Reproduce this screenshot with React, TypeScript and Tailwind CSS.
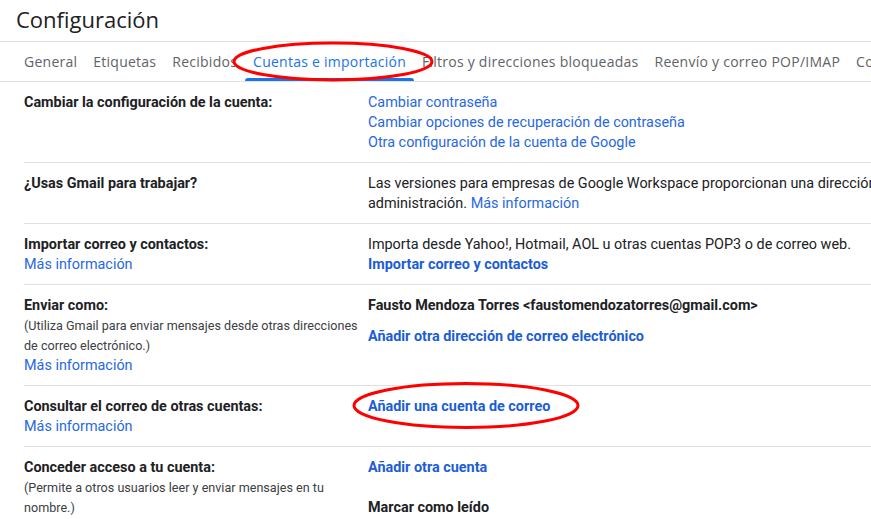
import React from 'react';

const tabs = [
  'General',
  'Etiquetas',
  'Recibidos',
  'Cuentas e importación',
  'Filtros y direcciones bloqueadas',
  'Reenvío y correo POP/IMAP',
  'Complementos',
];

function Link({ children, bold }: { children: React.ReactNode; bold?: boolean }) {
  return (
    <a href="#" className={`${bold ? 'font-bold text-[#1a5dd6]' : 'text-[#2868e0]'} whitespace-nowrap`}>
      {children}
    </a>
  );
}

function Row({ label, children }: { label: React.ReactNode; children: React.ReactNode }) {
  return (
    <div className="flex border-b border-[#e0e0e0] pt-[11px] pb-[9px]">
      <div className="w-[344px] shrink-0">{label}</div>
      <div className="flex-1 whitespace-nowrap">{children}</div>
    </div>
  );
}

export default function App() {
  return (
    <div
      className="relative w-[871px] h-[519px] overflow-hidden bg-white text-[14.4px] leading-[20px] text-[#202124]"
      style={{ fontFamily: 'Roboto, Arial, sans-serif' }}
    >
      {/* Title */}
      <div className="h-[41px] pl-4 pb-[4px] flex items-center">
        <h1 className="text-[22px] text-[#202124]" style={{ fontFamily: '"Open Sans", Roboto, sans-serif' }}>
          Configuración
        </h1>
      </div>

      {/* Tabs */}
      <div
        className="border-t border-b border-[#e0e0e0] h-[41px] pl-4 flex whitespace-nowrap"
        style={{ fontFamily: '"Open Sans", Roboto, sans-serif' }}
      >
        {tabs.map((t, i) => (
          <div
            key={t}
            className={`relative px-2 pt-[1px] flex items-center text-[14px] tracking-[0.25px] ${i === 3 ? 'text-[#1a73e8]' : 'text-[#5f6368]'}`}
          >
            {t}
            {i === 3 && <div className="absolute left-0 right-0 bottom-0 h-[3px] bg-[#1a73e8] rounded-t-[3px]" />}
          </div>
        ))}
      </div>

      {/* Settings table */}
      <div className="ml-6 w-[1100px]">
        <Row label={<div className="font-bold">Cambiar la configuración de la cuenta:</div>}>
          <div><Link>Cambiar contraseña</Link></div>
          <div><Link>Cambiar opciones de recuperación de contraseña</Link></div>
          <div><Link>Otra configuración de la cuenta de Google</Link></div>
        </Row>

        <Row label={<div className="font-bold">¿Usas Gmail para trabajar?</div>}>
          <div>
            Las versiones para empresas de Google Workspace proporcionan una dirección de correo electrónico personalizada y herramientas de
          </div>
          <div>
            administración. <Link>Más información</Link>
          </div>
        </Row>

        <Row
          label={
            <>
              <div className="font-bold">Importar correo y contactos:</div>
              <div><Link>Más información</Link></div>
            </>
          }
        >
          <div>Importa desde Yahoo!, Hotmail, AOL u otras cuentas POP3 o de correo web.</div>
          <div><Link bold>Importar correo y contactos</Link></div>
        </Row>

        <Row
          label={
            <>
              <div className="font-bold">Enviar como:</div>
              <div className="text-[12.6px] text-[#3c4043] whitespace-nowrap">
                (Utiliza Gmail para enviar mensajes desde otras direcciones
                <br />
                de correo electrónico.)
              </div>
              <div><Link>Más información</Link></div>
            </>
          }
        >
          <div className="font-bold">Fausto Mendoza Torres &lt;faustomendozatorres@gmail.com&gt;</div>
          <div className="mt-[11px]"><Link bold>Añadir otra dirección de correo electrónico</Link></div>
        </Row>

        <Row
          label={
            <>
              <div className="font-bold">Consultar el correo de otras cuentas:</div>
              <div><Link>Más información</Link></div>
            </>
          }
        >
          <div><Link bold>Añadir una cuenta de correo</Link></div>
        </Row>

        <Row
          label={
            <>
              <div className="font-bold">Conceder acceso a tu cuenta:</div>
              <div className="text-[12.6px] text-[#3c4043] whitespace-nowrap">
                (Permite a otros usuarios leer y enviar mensajes en tu
                <br />
                nombre.)
              </div>
            </>
          }
        >
          <div><Link bold>Añadir otra cuenta</Link></div>
          <div className="mt-[20px] font-bold">Marcar como leído</div>
        </Row>
      </div>

      {/* Red annotation ellipses */}
      <svg className="absolute left-0 top-0 pointer-events-none" width="871" height="519">
        <ellipse cx="333" cy="61.5" rx="99" ry="18.5" fill="none" stroke="#ff0000" strokeWidth="3" />
        <ellipse cx="466" cy="405.5" rx="112" ry="22" fill="none" stroke="#ff0000" strokeWidth="3" />
      </svg>
    </div>
  );
}
